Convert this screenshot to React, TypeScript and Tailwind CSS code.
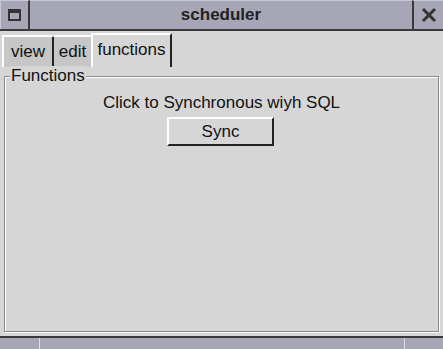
import React from 'react';

const font = { fontFamily: '"Liberation Sans", Arial, sans-serif' };

export default function App() {
  return (
    <div className="w-[443px] h-[349px] flex flex-col bg-[#d6d6d6] overflow-hidden" style={font}>
      {/* Title bar */}
      <div className="h-[31px] flex bg-[#a6a6b6] border-b-2 border-[#3a3a3a]">
        <div className="w-[30px] flex items-center justify-center border-r-2 border-[#3a3a3a] border-t border-l border-t-[#c8c8d4] border-l-[#c8c8d4]">
          <div className="w-[13px] h-[12px] border-2 border-[#333] border-t-4" />
        </div>
        <div className="flex-1 flex items-center justify-center text-[17px] font-bold text-[#222] border-t border-[#c8c8d4]">
          scheduler
        </div>
        <div className="w-[31px] flex items-center justify-center border-l-2 border-[#3a3a3a] border-t border-t-[#c8c8d4]">
          <svg width="16" height="16" viewBox="0 0 16 16">
            <path d="M2 2 L14 14 M14 2 L2 14" stroke="#333" strokeWidth="3" />
          </svg>
        </div>
      </div>

      {/* Tabs */}
      <div className="flex pl-[2px] pt-[3px] h-[36px]">
        <div className="w-[50px] flex items-center justify-center bg-[#c6c6c6] border-t-2 border-l-2 border-white text-[17px] text-[#111] mt-[1px]">
          view
        </div>
        <div className="w-[2px] bg-[#222] mt-[3px]" />
        <div className="w-[37px] flex items-center justify-center bg-[#c6c6c6] border-t-2 border-white text-[17px] text-[#111] mt-[1px]">
          edit
        </div>
        <div className="w-[81px] flex items-center justify-center bg-[#d6d6d6] border-t-2 border-l-2 border-white border-r-2 border-r-[#222] text-[17px] text-[#111] -mt-[1px] pb-[2px]">
          functions
        </div>
      </div>

      {/* Body */}
      <div className="flex-1 flex flex-col px-[4px] pt-[9px] pb-[4px]">
        <div className="relative flex-1 border border-[#8a8a8a] shadow-[inset_1px_1px_0_#fff,1px_1px_0_#fff] flex flex-col items-center pt-[16px]">
          <span className="absolute -top-[11px] left-[5px] bg-[#d6d6d6] px-[1px] text-[17px] leading-[20px] text-[#111]">
            Functions
          </span>
          <div className="text-[17px] text-[#111] leading-[20px]">Click to Synchronous wiyh SQL</div>
          <button className="mt-[4px] -ml-[2px] w-[107px] h-[29px] bg-[#d6d6d6] border-2 border-t-white border-l-white border-r-[#222] border-b-[#222] text-[17px] text-[#111] leading-none">
            Sync
          </button>
        </div>
      </div>

      {/* Bottom bar */}
      <div className="h-[13px] flex bg-[#a6a6b6] border-t-2 border-[#3a3a3a]">
        <div className="w-[40px] border-r border-[#e0e0e8]" />
        <div className="flex-1 border-r border-[#e0e0e8]" />
        <div className="w-[38px]" />
      </div>
    </div>
  );
}
